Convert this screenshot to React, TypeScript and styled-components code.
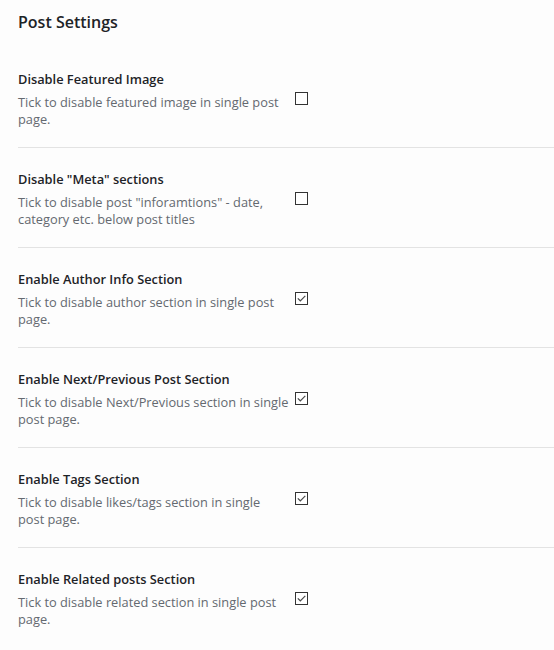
import styled, { createGlobalStyle } from "styled-components"

const GlobalStyle = createGlobalStyle`
    html, body {
        margin: 0;
        padding: 0;
        background-color: #fdfdfd;
    }
    body {
        font-family: 'Open Sans', 'Noto Sans', sans-serif;
        -webkit-font-smoothing: antialiased;
    }
`

const Page = styled.div`
    width: 554px;
    height: 650px;
    padding-left: 18px;
    box-sizing: border-box;
    overflow: hidden;
`

const Heading = styled.h2`
    margin: 0;
    padding-top: 11px;
    padding-bottom: 15px;
    font-size: 16px;
    line-height: 22px;
    font-weight: 600;
    color: #1d2327;
`

const Row = styled.div<{ $last?: boolean }>`
    display: grid;
    grid-template-columns: 275px 1fr;
    column-gap: 2px;
    padding: 22px 0 19px;
    border-bottom: ${(p) => (p.$last ? "none" : "1px solid #e3e3e3")};
    height: 58px;
`

const Label = styled.div`
    display: flex;
    flex-direction: column;
`

const Title = styled.div`
    font-size: 12.8px;
    line-height: 18px;
    font-weight: 600;
    color: #1d2327;
`

const Description = styled.div`
    margin-top: 6px;
    font-size: 12.8px;
    line-height: 17px;
    color: #646970;
`

const Box = styled.span`
    display: flex;
    align-items: center;
    justify-content: center;
    margin-top: 22px;
    width: 11px;
    height: 11px;
    border: 1px solid #333;
    background: #fff;
`

interface SettingProps {
    title: string
    description: string
    checked?: boolean
    last?: boolean
}

function Setting(props: SettingProps) {
    return (
        <Row $last={props.last}>
            <Label>
                <Title>{props.title}</Title>
                <Description>{props.description}</Description>
            </Label>
            <div>
                <Box>
                    {props.checked && (
                        <svg width="9" height="7" viewBox="0 0 9 7">
                            <path d="M0.8 3.4 L3.3 5.8 L8.3 0.8" fill="none" stroke="#4a4a4a" strokeWidth="1.2" />
                        </svg>
                    )}
                </Box>
            </div>
        </Row>
    )
}

const settings: SettingProps[] = [
    { title: "Disable Featured Image", description: "Tick to disable featured image in single post page." },
    { title: 'Disable "Meta" sections', description: 'Tick to disable post "inforamtions" - date, category etc. below post titles' },
    { title: "Enable Author Info Section", description: "Tick to disable author section in single post page.", checked: true },
    { title: "Enable Next/Previous Post Section", description: "Tick to disable Next/Previous section in single post page.", checked: true },
    { title: "Enable Tags Section", description: "Tick to disable likes/tags section in single post\u00a0page.", checked: true },
    { title: "Enable Related posts Section", description: "Tick to disable related section in single post page.", checked: true, last: true },
]

export default function App() {
    return (
        <>
            <GlobalStyle />
            <Page>
                <Heading>Post Settings</Heading>
                {settings.map((s) => (
                    <Setting key={s.title} {...s} />
                ))}
            </Page>
        </>
    )
}
